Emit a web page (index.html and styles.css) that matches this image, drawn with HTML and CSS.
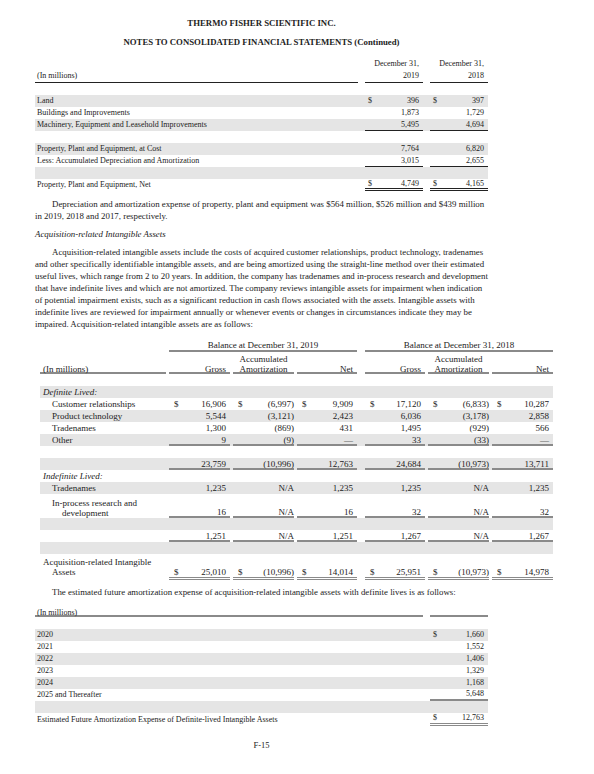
FILE: index.html
```html
<!DOCTYPE html>
<html>
<head>
<meta charset="utf-8">
<link rel="stylesheet" href="styles.css">
</head>
<body>
<div class="page">
  <h1 class="title">THERMO FISHER SCIENTIFIC INC.</h1>
  <h2 class="title title2">NOTES TO CONSOLIDATED FINANCIAL STATEMENTS (Continued)</h2>

  <table class="tbl t1">
    <colgroup>
      <col class="w-lab"><col class="w-sp"><col class="w-val"><col class="w-sp"><col class="w-val">
    </colgroup>
    <tr class="hdr">
      <td class="l b">(In millions)</td><td class="s"></td>
      <td class="v b">December 31,<br>2019</td><td class="s"></td>
      <td class="v b">December 31,<br>2018</td>
    </tr>
    <tr><td class="l"></td><td class="s"></td><td></td><td class="s"></td><td></td></tr>
    <tr class="g">
      <td class="l">Land</td><td class="s"></td>
      <td class="v"><span class="d">$</span>396</td><td class="s"></td>
      <td class="v"><span class="d">$</span>397</td>
    </tr>
    <tr>
      <td class="l">Buildings and Improvements</td><td class="s"></td>
      <td class="v">1,873</td><td class="s"></td>
      <td class="v">1,729</td>
    </tr>
    <tr class="g">
      <td class="l">Machinery, Equipment and Leasehold Improvements</td><td class="s"></td>
      <td class="v b">5,495</td><td class="s"></td>
      <td class="v b">4,694</td>
    </tr>
    <tr><td class="l"></td><td class="s"></td><td></td><td class="s"></td><td></td></tr>
    <tr class="g">
      <td class="l">Property, Plant and Equipment, at Cost</td><td class="s"></td>
      <td class="v">7,764</td><td class="s"></td>
      <td class="v">6,820</td>
    </tr>
    <tr>
      <td class="l">Less: Accumulated Depreciation and Amortization</td><td class="s"></td>
      <td class="v b">3,015</td><td class="s"></td>
      <td class="v b">2,655</td>
    </tr>
    <tr class="g"><td class="l"></td><td class="s"></td><td></td><td class="s"></td><td></td></tr>
    <tr>
      <td class="l">Property, Plant and Equipment, Net</td><td class="s"></td>
      <td class="v bb"><span class="d">$</span>4,749</td><td class="s"></td>
      <td class="v bb"><span class="d">$</span>4,165</td>
    </tr>
  </table>

  <p class="para p1">Depreciation and amortization expense of property, plant and equipment was $564 million, $526 million and $439 million<br>in 2019, 2018 and 2017, respectively.</p>
  <p class="para sub">Acquisition-related Intangible Assets</p>
  <p class="para">Acquisition-related intangible assets include the costs of acquired customer relationships, product technology, tradenames<br>and other specifically identifiable intangible assets, and are being amortized using the straight-line method over their estimated<br>useful lives, which range from 2 to 20 years. In addition, the company has tradenames and in-process research and development<br>that have indefinite lives and which are not amortized. The company reviews intangible assets for impairment when indication<br>of potential impairment exists, such as a significant reduction in cash flows associated with the assets. Intangible assets with<br>indefinite lives are reviewed for impairment annually or whenever events or changes in circumstances indicate they may be<br>impaired. Acquisition-related intangible assets are as follows:</p>

  <table class="tbl t2">
    <colgroup>
      <col class="w-lab"><col class="w-s3">
      <col class="w-61"><col class="w-s3"><col class="w-61"><col class="w-s3"><col class="w-60">
      <col class="w-s8">
      <col class="w-60"><col class="w-s3"><col class="w-61"><col class="w-s3"><col class="w-61">
    </colgroup>
    <tr class="bal">
      <td class="l"></td><td class="s"></td>
      <td class="c u" colspan="5">Balance at December 31, 2019</td>
      <td class="s"></td>
      <td class="c u" colspan="5">Balance at December 31, 2018</td>
    </tr>
    <tr class="hdr">
      <td class="l u">(In millions)</td><td class="s"></td>
      <td class="v u">Gross</td><td class="s"></td>
      <td class="c u">Accumulated<br>Amortization</td><td class="s"></td>
      <td class="v u">Net</td><td class="s"></td>
      <td class="v u">Gross</td><td class="s"></td>
      <td class="c u">Accumulated<br>Amortization</td><td class="s"></td>
      <td class="v u">Net</td>
    </tr>
    <tr><td class="l"></td><td class="s" colspan="12"></td></tr>
    <tr class="g"><td class="l"><em>Definite Lived:</em></td><td class="s" colspan="12"></td></tr>
    <tr>
      <td class="l in">Customer relationships</td><td class="s"></td>
      <td class="v"><span class="d">$</span>16,906</td><td class="s"></td>
      <td class="a"><span class="d">$</span>(6,997)</td><td class="s"></td>
      <td class="v"><span class="d">$</span>9,909</td><td class="s"></td>
      <td class="v"><span class="d">$</span>17,120</td><td class="s"></td>
      <td class="a"><span class="d">$</span>(6,833)</td><td class="s"></td>
      <td class="v"><span class="d">$</span>10,287</td>
    </tr>
    <tr class="g">
      <td class="l in">Product technology</td><td class="s"></td>
      <td class="v">5,544</td><td class="s"></td>
      <td class="a">(3,121)</td><td class="s"></td>
      <td class="v">2,423</td><td class="s"></td>
      <td class="v">6,036</td><td class="s"></td>
      <td class="a">(3,178)</td><td class="s"></td>
      <td class="v">2,858</td>
    </tr>
    <tr>
      <td class="l in">Tradenames</td><td class="s"></td>
      <td class="v">1,300</td><td class="s"></td>
      <td class="a">(869)</td><td class="s"></td>
      <td class="v">431</td><td class="s"></td>
      <td class="v">1,495</td><td class="s"></td>
      <td class="a">(929)</td><td class="s"></td>
      <td class="v">566</td>
    </tr>
    <tr class="g">
      <td class="l in">Other</td><td class="s"></td>
      <td class="v u">9</td><td class="s"></td>
      <td class="a u">(9)</td><td class="s"></td>
      <td class="v u dash">—</td><td class="s"></td>
      <td class="v u">33</td><td class="s"></td>
      <td class="a u">(33)</td><td class="s"></td>
      <td class="v u dash">—</td>
    </tr>
    <tr><td class="l"></td><td class="s" colspan="12"></td></tr>
    <tr class="g">
      <td class="l"></td><td class="s"></td>
      <td class="v u">23,759</td><td class="s"></td>
      <td class="a u">(10,996)</td><td class="s"></td>
      <td class="v u">12,763</td><td class="s"></td>
      <td class="v u">24,684</td><td class="s"></td>
      <td class="a u">(10,973)</td><td class="s"></td>
      <td class="v u">13,711</td>
    </tr>
    <tr><td class="l"><em>Indefinite Lived:</em></td><td class="s" colspan="12"></td></tr>
    <tr class="g">
      <td class="l in">Tradenames</td><td class="s"></td>
      <td class="v">1,235</td><td class="s"></td>
      <td class="a">N/A</td><td class="s"></td>
      <td class="v">1,235</td><td class="s"></td>
      <td class="v">1,235</td><td class="s"></td>
      <td class="a">N/A</td><td class="s"></td>
      <td class="v">1,235</td>
    </tr>
    <tr class="tall">
      <td class="l"><span class="hang h2">In-process research and<br>development</span></td><td class="s"></td>
      <td class="v u">16</td><td class="s"></td>
      <td class="a u">N/A</td><td class="s"></td>
      <td class="v u">16</td><td class="s"></td>
      <td class="v u">32</td><td class="s"></td>
      <td class="a u">N/A</td><td class="s"></td>
      <td class="v u">32</td>
    </tr>
    <tr class="g"><td class="l"></td><td class="s" colspan="12"></td></tr>
    <tr>
      <td class="l"></td><td class="s"></td>
      <td class="v u">1,251</td><td class="s"></td>
      <td class="a u">N/A</td><td class="s"></td>
      <td class="v u">1,251</td><td class="s"></td>
      <td class="v u">1,267</td><td class="s"></td>
      <td class="a u">N/A</td><td class="s"></td>
      <td class="v u">1,267</td>
    </tr>
    <tr class="g"><td class="l"></td><td class="s" colspan="12"></td></tr>
    <tr class="tot">
      <td class="l"><span class="hang h1">Acquisition-related Intangible<br>Assets</span></td><td class="s"></td>
      <td class="v uu"><span class="d">$</span>25,010</td><td class="s"></td>
      <td class="a uu"><span class="d">$</span>(10,996)</td><td class="s"></td>
      <td class="v uu"><span class="d">$</span>14,014</td><td class="s"></td>
      <td class="v uu"><span class="d">$</span>25,951</td><td class="s"></td>
      <td class="a uu"><span class="d">$</span>(10,973)</td><td class="s"></td>
      <td class="v uu"><span class="d">$</span>14,978</td>
    </tr>
  </table>

  <p class="para p3">The estimated future amortization expense of acquisition-related intangible assets with definite lives is as follows:</p>

  <table class="tbl t3">
    <colgroup>
      <col class="w-lab"><col class="w-sp"><col class="w-val">
    </colgroup>
    <tr class="hdr">
      <td class="l u">(In millions)</td><td class="s"></td><td class="v u"></td>
    </tr>
    <tr><td class="l"></td><td class="s"></td><td></td></tr>
    <tr class="g"><td class="l">2020</td><td class="s"></td><td class="v"><span class="d">$</span>1,660</td></tr>
    <tr><td class="l">2021</td><td class="s"></td><td class="v">1,552</td></tr>
    <tr class="g"><td class="l">2022</td><td class="s"></td><td class="v">1,406</td></tr>
    <tr><td class="l">2023</td><td class="s"></td><td class="v">1,329</td></tr>
    <tr class="g"><td class="l">2024</td><td class="s"></td><td class="v">1,168</td></tr>
    <tr><td class="l">2025 and Thereafter</td><td class="s"></td><td class="v b">5,648</td></tr>
    <tr class="g"><td class="l"></td><td class="s"></td><td></td></tr>
    <tr class="tot">
      <td class="l">Estimated Future Amortization Expense of Definite-lived Intangible Assets</td><td class="s"></td>
      <td class="v bb"><span class="d">$</span>12,763</td>
    </tr>
  </table>

  <p class="folio">F-15</p>
</div>
</body>
</html>
```

FILE: styles.css
```css
* { box-sizing: border-box; }

body {
  margin: 0;
  background: #ffffff;
  color: #222222;
  font-family: "Liberation Serif", "Times New Roman", serif;
}

.page {
  width: 594px;
  height: 774px;
  padding: 17px 0 0 35px;
}

.title {
  margin: 0;
  width: 453px;
  text-align: center;
  font-size: 8.75px;
  font-weight: bold;
  line-height: 12px;
}

.title2 { margin-top: 7px; }

/* ---------- tables ---------- */
.tbl {
  border-collapse: separate;
  border-spacing: 0;
  table-layout: fixed;
  font-size: 8px;
}

.tbl td {
  height: 12px;
  padding: 0 4px 0 3px;
  line-height: 12px;
  vertical-align: bottom;
  white-space: nowrap;
  text-align: right;
}

.tbl td.l { text-align: left; padding: 0 0 0 2px; }
.tbl td.s { padding: 0; }
.tbl td.c { text-align: center; padding: 0; }

.g { background: #e5e5e5; }

.d { float: left; }

/* table 1 */
.t1 { margin-top: 10px; width: 453px; }
.t1 .w-lab { width: 323px; }
.t1 .w-sp { width: 7px; }
.t1 .w-val { width: 58px; }
.t1 .hdr td { height: 25px; }
.t1 td.b { border-bottom: 1px solid #222; line-height: 11px; }
.t1 .hdr td.b { line-height: 12px; }
.t1 td.bb { border-bottom: 3px double #222; line-height: 9px; }

/* paragraphs */
.para {
  margin: 6px 0 0 0;
  font-size: 8.85px;
  line-height: 12px;
  white-space: nowrap;
  text-indent: 17px;
}
.p1 { margin-top: 7px; }
.sub {
  font-style: italic;
  text-indent: 0;
}
.p3 { margin-top: 6px; }

/* table 2 */
.t2 {
  margin: 10px 0 0 5px;
  width: 513px;
  font-size: 9px;
}
.t2 .w-lab { width: 126px; }
.t2 .w-s3 { width: 3px; }
.t2 .w-s8 { width: 8px; }
.t2 .w-60 { width: 60px; }
.t2 .w-61 { width: 61px; }
.t2 td { padding: 0 4px 0 5px; }
.t2 td.a { padding: 0 0 0 5px; }
.t2 td.l { padding-left: 3px; }
.t2 td.in { padding-left: 12px; }
.t2 td.s,
.t2 td.c { padding: 0; }
.t2 .bal td { line-height: 11px; padding-bottom: 1px; }
.t2 .hdr td { height: 22px; line-height: 10px; }
.t2 .tall td { height: 24px; }
.t2 .tot td { height: 26px; line-height: 10px; padding-bottom: 3px; }

.t2 .u,
.t3 .u { box-shadow: inset 0 -2px 0 #8a8a8a; }
.t2 .uu { box-shadow: inset 0 -1px 0 #8a8a8a, inset 0 -2px 0 #fff, inset 0 -3px 0 #8a8a8a; }

.hang {
  display: block;
  line-height: 10px;
}
.hang.h2 { padding-left: 19px; text-indent: -10px; }
.hang.h1 { padding-left: 9px; text-indent: -9px; }
.dash { color: #666; }

/* table 3 */
.t3 { margin-top: 7px; width: 453px; }
.t3 .w-lab { width: 388px; }
.t3 .w-sp { width: 7px; }
.t3 .w-val { width: 58px; }
.t3 .hdr td { line-height: 8px; padding-top: 4px; }
.t3 .tot td { height: 13px; }
.t3 td.b { border-bottom: 2px solid #8a8a8a; line-height: 10px; }
.t3 td.bb { border-bottom: 3px double #8a8a8a; line-height: 10px; }

.folio {
  margin: 13px 0 0 0;
  width: 453px;
  text-align: center;
  font-size: 8.5px;
  line-height: 12px;
}
```
